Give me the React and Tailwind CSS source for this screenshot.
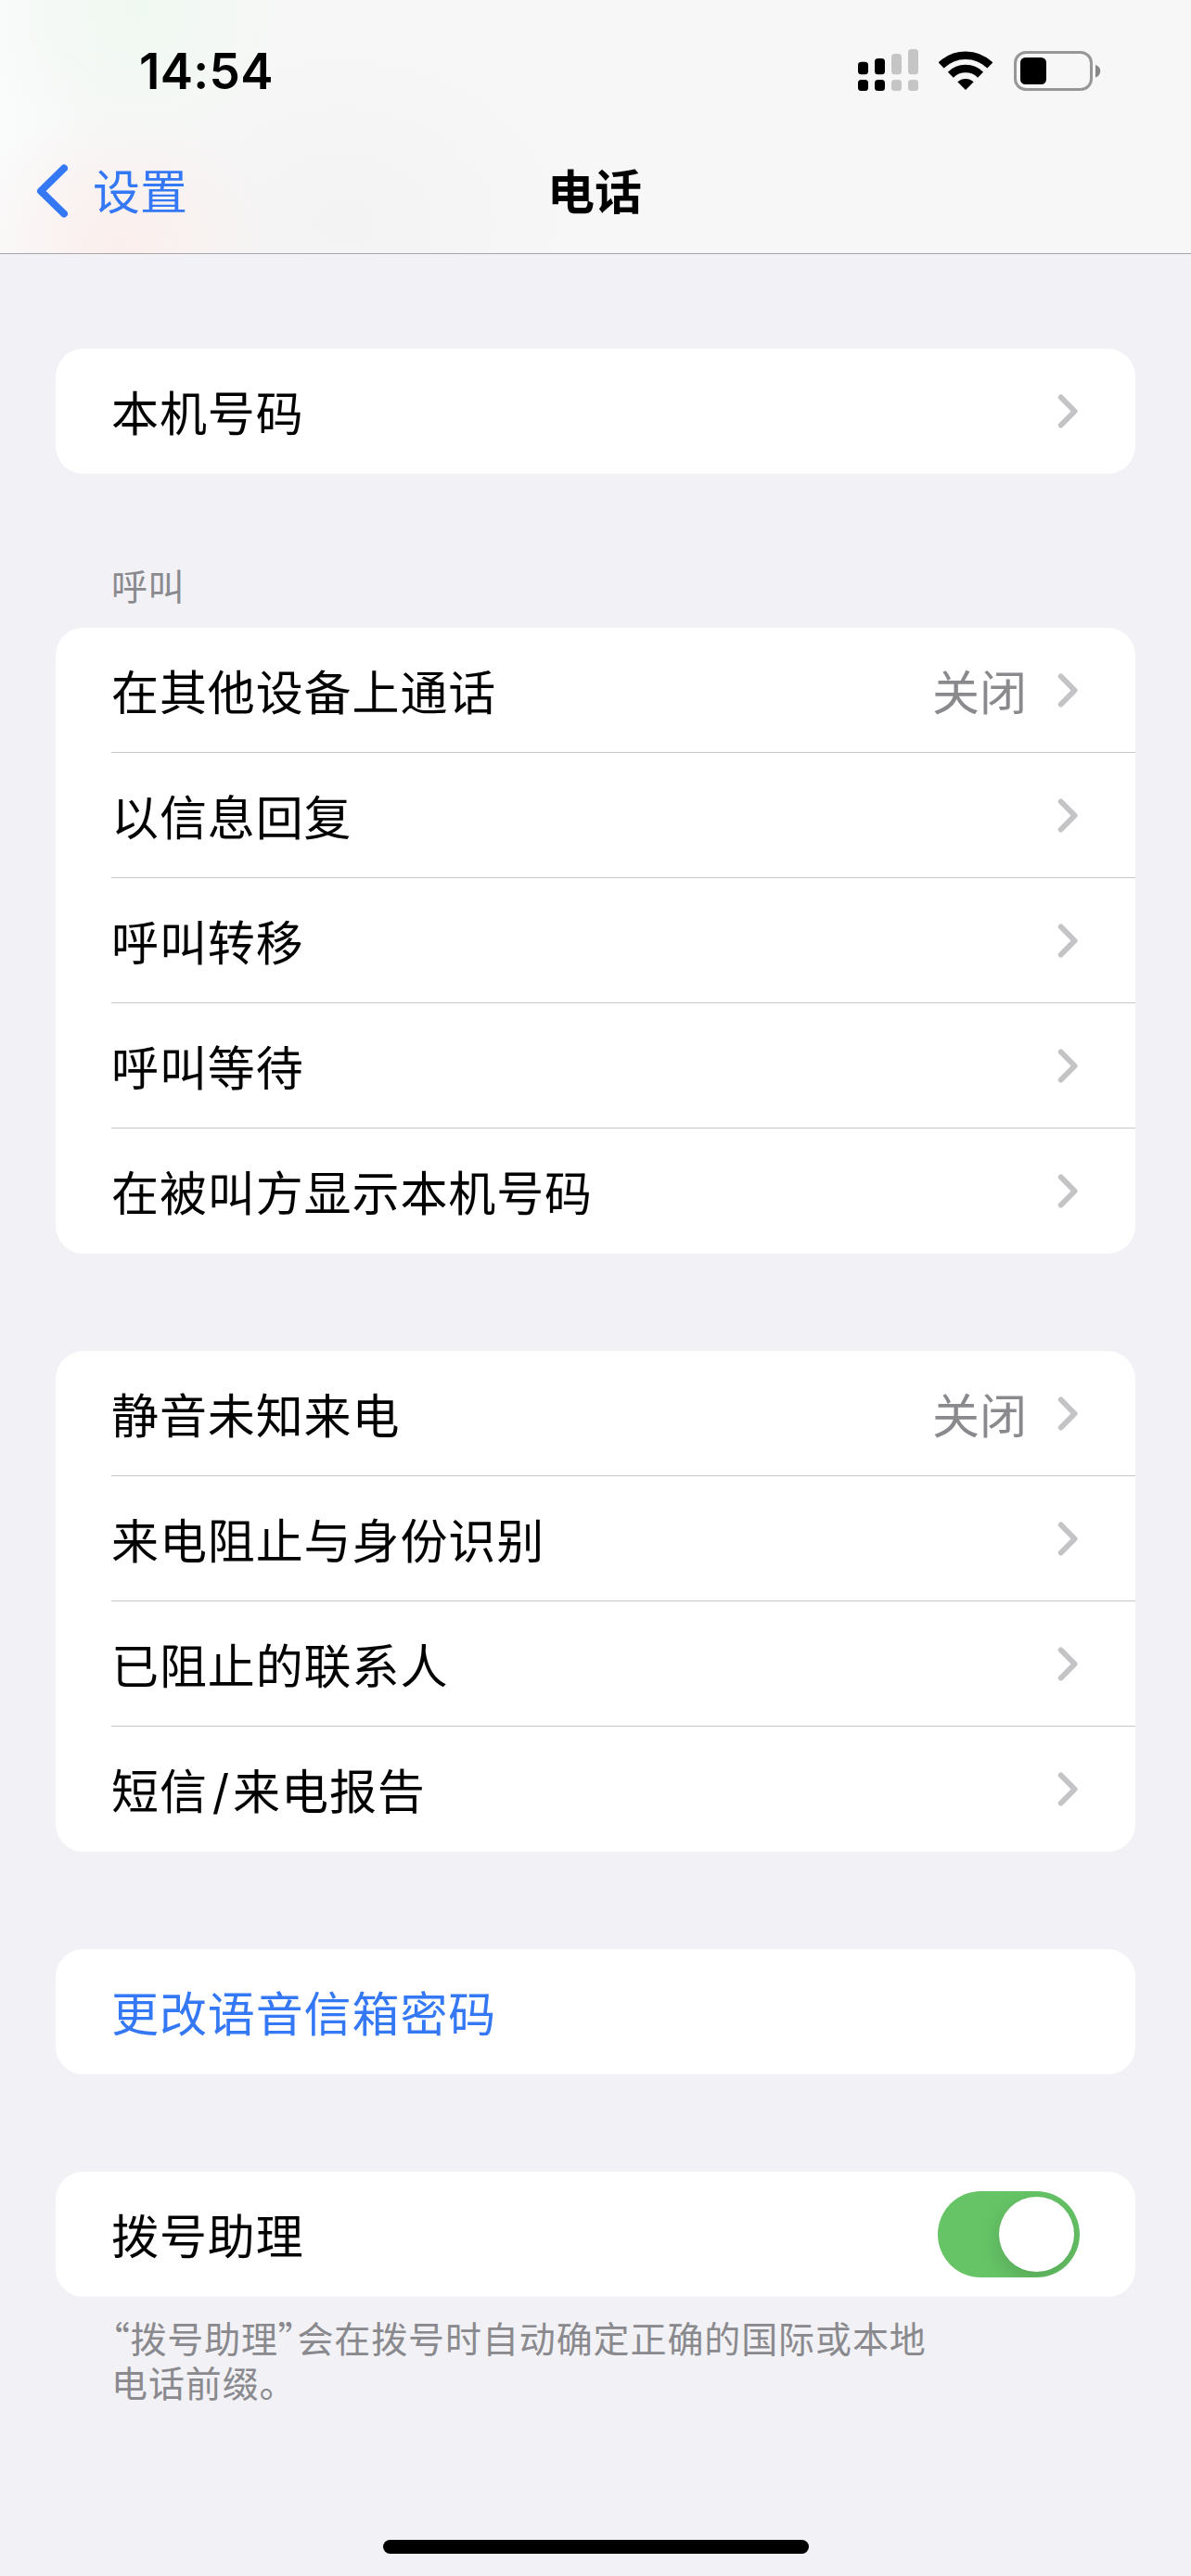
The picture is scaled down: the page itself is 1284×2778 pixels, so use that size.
/**
 * Settings — Phone page
 */
import React, { useState } from 'react'
import clsx from 'clsx'

const CALLS = [
  { id:'devices',  label:'在其他设备上通话', value:'关闭' },
  { id:'reply',    label:'以信息回复' },
  { id:'forward',  label:'呼叫转移' },
  { id:'waiting',  label:'呼叫等待' },
  { id:'callerid', label:'在被叫方显示本机号码' },
]

const BLOCKING = [
  { id:'silence',  label:'静音未知来电', value:'关闭' },
  { id:'identify', label:'来电阻止与身份识别' },
  { id:'blocked',  label:'已阻止的联系人' },
  { id:'report',   label:<>短信<span className="ml-[5px] mr-[3px]">/</span>来电报告</> },
]

function Signal() {
  return (
    <svg className="w-[66px] h-[46px]" viewBox="0 0 66 46">
      <g fill="#000">
        <rect x="0" y="13.7" width="11" height="13.5" rx="3.5" />
        <rect x="18" y="10" width="11" height="17.2" rx="3.5" />
        <rect x="0" y="33" width="11" height="12" rx="3.5" />
        <rect x="18" y="33" width="11" height="12" rx="3.5" />
      </g>
      <g fill="#c5c5c5">
        <rect x="36" y="5" width="11" height="22.2" rx="3.5" />
        <rect x="54" y="0" width="11" height="27.2" rx="3.5" />
        <rect x="36" y="33" width="11" height="12" rx="3.5" />
        <rect x="54" y="33" width="11" height="12" rx="3.5" />
      </g>
    </svg>
  )
}

function Wifi() {
  return (
    <svg className="w-[58px] h-[43px]" viewBox="0 0 58 43">
      <g fill="none" stroke="#000" strokeWidth="8.5">
        <path d="M2.6 15.5A37.6 37.6 0 0 1 55.4 15.5" />
        <path d="M12.9 25.7A22.9 22.9 0 0 1 45.1 25.7" />
      </g>
      <path d="M29 42L20.3 33.3A12.8 12.8 0 0 1 37.7 33.3Z" fill="#000" />
    </svg>
  )
}

function Battery() {
  return (
    <svg className="w-[94px] h-[43px]" viewBox="0 0 94 43">
      <rect x="1.5" y="1.5" width="82" height="40" rx="11.5" fill="none" stroke="#979797" strokeWidth="3" />
      <rect x="7" y="7" width="28" height="29" rx="5.5" fill="#000" />
      <path d="M88 15C91.5 16 93.3 18.5 93.3 21.5S91.5 27.5 88 28.5Z" fill="#888" />
    </svg>
  )
}

function Chevron() {
  return (
    <svg className="mr-[2px] w-[22px] h-[37px]" viewBox="0 0 22 37">
      <path d="M3.8 3.5L18.6 18.5L3.8 33.5" fill="none" stroke="#c4c4c6"
            strokeWidth="6" strokeLinecap="round" strokeLinejoin="round" />
    </svg>
  )
}

function Card({ children, className }) {
  return (
    <div className={clsx('mx-[60px] overflow-hidden rounded-[30px] bg-white', className)}>
      {children}
    </div>
  )
}

function Row({ label, value, link, last, children }) {
  return (
    <div className="pl-[60px]">
      <div className={clsx(
        'flex h-[135px] items-center border-b pr-[60px]',
        last ? 'border-transparent' : 'border-[#c6c6c8]'
      )}>
        <span className={clsx('flex-1 pt-[7px] tracking-[0.9px]', link && 'text-[#3478f6]')}>{label}</span>
        {value && <span className="mr-[33px] pt-[7px] text-[#8a8a8e]">{value}</span>}
        {children || (!link && <Chevron />)}
      </div>
    </div>
  )
}

function Toggle({ on, onChange }) {
  return (
    <button onClick={() => onChange(!on)} role="switch" aria-checked={on} aria-label="拨号助理"
      className={clsx(
        'flex h-[93px] w-[153px] overflow-hidden rounded-full p-[6px]',
        on ? 'justify-end bg-[#66c466]' : 'justify-start bg-[#e9e9ea]'
      )}>
      <span className="h-[81px] w-[81px] rounded-full bg-white shadow-[0_8px_24px_rgba(0,0,0,0.15)]" />
    </button>
  )
}

// proportional-width curly quotes
function Quote({ children }) {
  return (
    <span className="font-['Noto_Sans_CJK_SC',sans-serif] [font-feature-settings:'palt']">{children}</span>
  )
}

export default function App() {
  const [assist, setAssist] = useState(true)

  return (
    <div className="flex h-[2778px] w-[1284px] flex-col bg-[#f1f1f6] font-[Inter,'Noto_Sans_CJK_SC',sans-serif] text-[51px] leading-[72px] text-black">
      <header className="h-[274px] border-b border-[#a6a6ab] bg-[#f7f7f7] bg-[radial-gradient(ellipse_170px_160px_at_150px_10px,#f0f9f1,transparent),radial-gradient(ellipse_170px_150px_at_130px_264px,#fbefed,transparent),radial-gradient(ellipse_260px_200px_at_370px_240px,#f3f3f3,transparent),linear-gradient(90deg,#fafbfb,#f7f7f7_120px)]">
        <div className="flex h-[152px] items-center pl-[150px] pr-[97px]">
          <span className="flex-1 pt-[2px] text-[53px] font-semibold tracking-[0.3px]">14:54</span>
          <div className="flex items-center">
            <Signal />
            <div className="ml-[21px]"><Wifi /></div>
            <div className="ml-[23px]"><Battery /></div>
          </div>
        </div>
        <div className="grid grid-cols-3 items-center px-[39px] pt-[16px]">
          <a className="flex items-center gap-[27px] text-[#3478f6]">
            <svg className="h-[58px] w-[34px]" viewBox="0 0 34 58">
              <path d="M30 4.5L5 29L30 53.5" fill="none" stroke="currentColor"
                    strokeWidth="8" strokeLinecap="round" strokeLinejoin="round" />
            </svg>
            <span className="pt-[4px]">设置</span>
          </a>
          <h1 className="pr-[2px] pt-[4px] text-center font-semibold">电话</h1>
        </div>
      </header>

      <main className="flex-1 pt-[102px]">
        <Card>
          <Row label="本机号码" last />
        </Card>

        <h2 className="mb-[20px] ml-[120px] mt-[98px] text-[39px] leading-[48px] tracking-[0.5px] text-[#8a8a8e]">呼叫</h2>
        <Card>
          {CALLS.map((r, i) => (
            <Row key={r.id} label={r.label} value={r.value} last={i === CALLS.length - 1} />
          ))}
        </Card>

        <Card className="mt-[105px]">
          {BLOCKING.map((r, i) => (
            <Row key={r.id} label={r.label} value={r.value} last={i === BLOCKING.length - 1} />
          ))}
        </Card>

        <Card className="mt-[105px]">
          <Row label="更改语音信箱密码" link last />
        </Card>

        <Card className="mt-[105px]">
          <Row label="拨号助理" last>
            <Toggle on={assist} onChange={setAssist} />
          </Row>
        </Card>
        <p className="ml-[120px] mt-[19px] text-[39px] leading-[48px] tracking-[0.9px] text-[#8a8a8e]">
          <Quote>“</Quote>拨号助理<Quote>”</Quote>会在拨号时自动确定正确的国际或本地<br />电话前缀。
        </p>
      </main>

      <div className="mx-auto mb-[24px] h-[15px] w-[459px] rounded-full bg-black" />
    </div>
  )
}
